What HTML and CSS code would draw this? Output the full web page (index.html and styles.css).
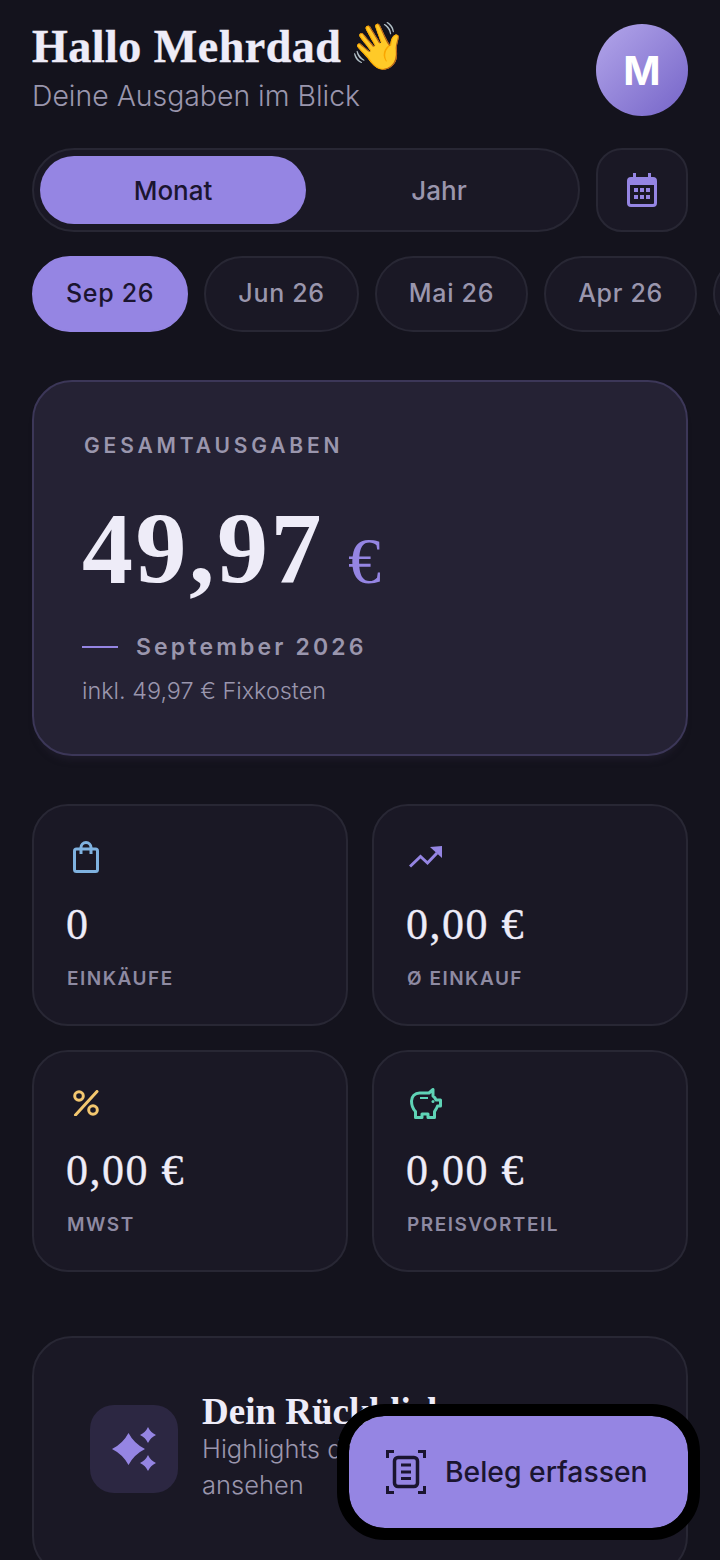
FILE: index.html
```html
<!DOCTYPE html>
<html lang="de">
<head>
    <meta charset="UTF-8">
    <meta name="viewport" content="width=device-width, initial-scale=1.0">
    <title>Ausgaben</title>
    <link rel="stylesheet" href="styles.css">
</head>
<body>
    <div class="page">
        <header class="top">
            <div class="greeting">
                <h1>Hallo Mehrdad <span class="wave">👋</span></h1>
                <p>Deine Ausgaben im Blick</p>
            </div>
            <div class="avatar">M</div>
        </header>

        <div class="range-row">
            <div class="segment">
                <button class="segment-item active">Monat</button>
                <button class="segment-item">Jahr</button>
            </div>
            <button class="calendar-button">
                <svg width="32" height="36" viewBox="0 0 32 36" fill="#9585e3">
                    <path d="M7 1h3v4h12V1h3v4h2a4 4 0 0 1 4 4v22a4 4 0 0 1-4 4H5a4 4 0 0 1-4-4V9a4 4 0 0 1 4-4h2zM4 13v18a1 1 0 0 0 1 1h22a1 1 0 0 0 1-1V13z" fill-rule="evenodd"/>
                    <rect x="8" y="16" width="4" height="4"/><rect x="14" y="16" width="4" height="4"/><rect x="20" y="16" width="4" height="4"/>
                    <rect x="8" y="23" width="4" height="4"/><rect x="14" y="23" width="4" height="4"/><rect x="20" y="23" width="4" height="4"/>
                </svg>
            </button>
        </div>

        <div class="chips">
            <span class="chip active">Sep 26</span>
            <span class="chip">Jun 26</span>
            <span class="chip">Mai 26</span>
            <span class="chip">Apr 26</span>
            <span class="chip">Mär 26</span>
        </div>

        <section class="hero">
            <div class="hero-label">GESAMTAUSGABEN</div>
            <div class="hero-amount">49,97 <span class="hero-currency">€</span></div>
            <div class="hero-period"><span class="hero-line"></span>September 2026</div>
            <div class="hero-note">inkl. 49,97 € Fixkosten</div>
        </section>

        <section class="stats">
            <div class="stat">
                <div class="stat-icon">
                    <svg width="26" height="32" viewBox="0 0 26 32" fill="none" stroke="#7fb2e0" stroke-width="3" stroke-linejoin="round">
                        <rect x="1.500" y="8" width="23" height="22.500" rx="2"/>
                        <path d="M8 13V6.500a5 5 0 0 1 10 0V13"/>
                    </svg>
                </div>
                <div class="stat-value">0</div>
                <div class="stat-label">EINKÄUFE</div>
            </div>
            <div class="stat">
                <div class="stat-icon">
                    <svg width="34" height="22" viewBox="0 0 34 22" fill="none" stroke="#9585e3" stroke-width="3">
                        <path d="M1 20.500l10.500-10 7 6.500L28 7"/>
                        <path d="M33 0v12L21 1z" fill="#9585e3" stroke="none"/>
                    </svg>
                </div>
                <div class="stat-value">0,00 €</div>
                <div class="stat-label">Ø EINKAUF</div>
            </div>
            <div class="stat">
                <div class="stat-icon">
                    <svg width="26" height="26" viewBox="0 0 26 26" fill="none" stroke="#f3c76f" stroke-width="3">
                        <circle cx="6" cy="6" r="4.300"/>
                        <circle cx="20" cy="20" r="4.300"/>
                        <path d="M24 1.500L2.500 25" stroke-linecap="round"/>
                    </svg>
                </div>
                <div class="stat-value">0,00 €</div>
                <div class="stat-label">MWST</div>
            </div>
            <div class="stat">
                <div class="stat-icon">
                    <svg width="32" height="31" viewBox="0 0 32 31" fill="none" stroke="#5fd3b6" stroke-width="3" stroke-linejoin="round">
                        <path d="M5.500 29.500V23.500C3 21 1.500 17 1.500 13C1.500 8.500 5 5 9.500 5H19L23 1.500V8C24.500 9 25.500 10.500 26 12H30.500V18H27.500C27 20 25.500 22 24.500 23.500V29.500H18V26H12V29.500z"/>
                        <path d="M10 10h8" stroke-width="2"/>
                        <circle cx="23" cy="13.500" r="1.500" fill="#5fd3b6" stroke="none"/>
                    </svg>
                </div>
                <div class="stat-value">0,00 €</div>
                <div class="stat-label">PREISVORTEIL</div>
            </div>
        </section>

        <section class="review">
            <div class="review-icon">
                <svg width="44" height="44" viewBox="0 0 44 44" fill="#9585e3">
                    <path d="M16.500 6Q22 16.500 33 22Q22 27.500 16.500 38Q11 27.500 0 22Q11 16.500 16.500 6z"/>
                    <path d="M36 0Q38.500 5.500 44 8Q38.500 10.500 36 16Q33.500 10.500 28 8Q33.500 5.500 36 0z"/>
                    <path d="M36 28Q38.500 33.500 44 36Q38.500 38.500 36 44Q33.500 38.500 28 36Q33.500 33.500 36 28z"/>
                </svg>
            </div>
            <div class="review-text">
                <h2>Dein Rückblick</h2>
                <p>Highlights der letzten Monate ansehen</p>
            </div>
        </section>

        <button class="fab">
            <svg width="40" height="44" viewBox="0 0 40 44" fill="none" stroke="#1b1530" stroke-width="3">
                <path d="M1.500 8V1.500H8M32 1.500h6.500V8M1.500 36v6.500H8M32 42.500h6.500V36"/>
                <rect x="8.500" y="7.500" width="23" height="29" rx="3.500" stroke-width="3.500"/>
                <path d="M15 15h10M15 22h10M15 28.500h10"/>
            </svg>
            Beleg erfassen
        </button>
    </div>
</body>
</html>
```

FILE: styles.css
```css
* {
    box-sizing: border-box;
}

body {
    margin: 0;
    background: #14131d;
    color: #eeecf8;
    font-family: 'Inter', 'Liberation Sans', sans-serif;
}

button {
    font-family: inherit;
    border: none;
    background: none;
    padding: 0;
}

.page {
    position: relative;
    width: 720px;
    height: 1560px;
    overflow: hidden;
    padding: 24px 32px 0;
}

.top {
    height: 92px;
    display: flex;
    justify-content: space-between;
    align-items: flex-start;
}

.greeting h1 {
    margin: 0;
    height: 46px;
    font-family: 'Liberation Serif', serif;
    font-size: 46px;
    line-height: 46px;
    font-weight: 700;
    letter-spacing: 0.5px;
    -webkit-text-stroke: 0.4px #eeecf8;
    white-space: nowrap;
}

.wave {
    font-size: 46px;
    margin-left: -4px;
    -webkit-text-stroke: 0;
}

.greeting p {
    margin: 4px 0 0;
    font-size: 28.400px;
    line-height: 44px;
    font-weight: 300;
    color: #9a96ad;
}

.avatar {
    width: 92px;
    height: 92px;
    border-radius: 50%;
    background: linear-gradient(135deg, #b3a6ea 0%, #7564c8 100%);
    color: white;
    display: flex;
    align-items: center;
    justify-content: center;
    font-size: 40px;
    font-weight: 700;
}

.range-row {
    display: flex;
    gap: 16px;
    margin-top: 32px;
}

.segment {
    width: 548px;
    height: 84px;
    display: flex;
    padding: 6px;
    border-radius: 42px;
    background: #1a1825;
    border: 2px solid #282734;
}

.segment-item {
    width: 266px;
    height: 68px;
    border-radius: 34px;
    font-size: 26px;
    font-weight: 500;
    color: #9a96ad;
}

.segment-item.active {
    background: #9585e3;
    color: #1b1530;
}

.calendar-button {
    width: 92px;
    height: 84px;
    border-radius: 26px;
    background: #1a1825;
    border: 2px solid #282734;
    display: flex;
    align-items: center;
    justify-content: center;
}

.chips {
    display: flex;
    gap: 16px;
    margin-top: 24px;
}

.chip {
    flex: none;
    height: 76px;
    padding: 0 32px 2px;
    border-radius: 38px;
    background: #1a1825;
    border: 2px solid #282734;
    display: flex;
    align-items: center;
    font-size: 25px;
    font-weight: 500;
    letter-spacing: 0.700px;
    color: #9a96ad;
}

.chip.active {
    background: #9585e3;
    border-color: #9585e3;
    color: #1b1530;
}

.hero {
    height: 376px;
    margin-top: 48px;
    padding: 52px 48px 0;
    border-radius: 40px;
    background: #252234;
    border: 2px solid #3c3758;
    box-shadow: 0 8px 6px -4px rgba(37, 34, 52, 0.5);
}

.hero-label {
    font-size: 21px;
    line-height: 24px;
    font-weight: 600;
    letter-spacing: 3.850px;
    color: #9a96ad;
    padding-left: 2px;
}

.hero-amount {
    margin-top: 31px;
    font-family: 'Liberation Serif', serif;
    font-size: 102px;
    line-height: 120px;
    font-weight: 700;
    letter-spacing: 2.500px;
    word-spacing: -4px;
}

.hero-currency {
    font-size: 66px;
    font-weight: 400;
    letter-spacing: 0;
    color: #9585e3;
}

.hero-period {
    display: flex;
    align-items: center;
    gap: 18px;
    margin-top: 10px;
    font-size: 23px;
    line-height: 32px;
    font-weight: 600;
    letter-spacing: 3.150px;
    color: #9a96ad;
}

.hero-line {
    width: 36px;
    height: 2px;
    background: #9585e3;
}

.hero-note {
    margin-top: 12px;
    font-size: 23.400px;
    line-height: 32px;
    font-weight: 300;
    color: #9a96ad;
}

.stats {
    display: grid;
    grid-template-columns: 316px 316px;
    gap: 24px;
    margin-top: 48px;
}

.stat {
    height: 222px;
    padding: 31px 32px 0;
    border-radius: 36px;
    background: #1a1825;
    border: 2px solid #282734;
}

.stat-icon {
    width: 40px;
    height: 40px;
    display: flex;
    align-items: center;
    justify-content: center;
}

.stat-value {
    margin-top: 20px;
    font-family: 'Liberation Serif', serif;
    font-size: 44px;
    line-height: 56px;
    font-weight: 400;
    letter-spacing: 1.500px;
    -webkit-text-stroke: 0.3px #eeecf8;
}

.stat-label {
    margin-top: 14px;
    padding-left: 1px;
    font-size: 19px;
    line-height: 24px;
    font-weight: 600;
    letter-spacing: 1.500px;
    color: #8e8aa2;
}

.review {
    height: 240px;
    margin-top: 64px;
    padding: 67px 56px 0;
    border-radius: 40px;
    background: #1a1825;
    border: 2px solid #282734;
    display: flex;
    align-items: flex-start;
    gap: 24px;
}

.review-icon {
    flex: none;
    width: 88px;
    height: 88px;
    border-radius: 24px;
    background: #2c2742;
    display: flex;
    align-items: center;
    justify-content: center;
}

.review-text h2 {
    margin: -13px 0 0;
    font-family: 'Liberation Serif', serif;
    font-size: 37px;
    line-height: 40px;
    font-weight: 700;
}

.review-text p {
    margin: -1px 0 0;
    font-size: 25.500px;
    line-height: 36px;
    font-weight: 300;
    color: #9a96ad;
}

.fab {
    position: absolute;
    left: 337px;
    top: 1404px;
    width: 363px;
    height: 136px;
    border: 12px solid #000;
    border-radius: 48px;
    background: #9585e3;
    background-clip: padding-box;
    display: flex;
    align-items: center;
    gap: 19px;
    padding-left: 37px;
    font-size: 28.300px;
    font-weight: 500;
    color: #1b1530;
}
```
